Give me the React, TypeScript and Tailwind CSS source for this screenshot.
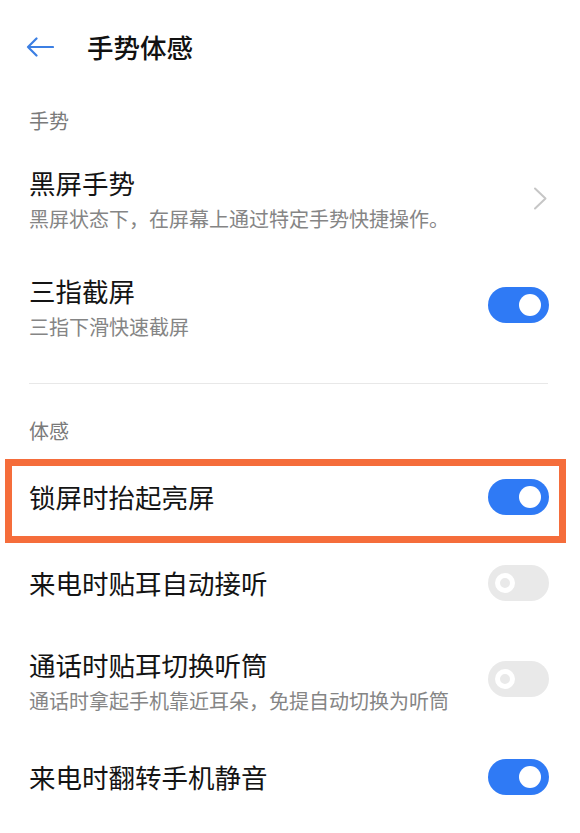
import { useState } from 'react';

type Kind = 'chevron' | 'toggle';

interface Item {
  title: string;
  desc?: string;
  kind: Kind;
  on?: boolean;
  highlight?: boolean;
}

interface Section {
  label: string;
  items: Item[];
}

const sections: Section[] = [
  {
    label: '手势',
    items: [
      { title: '黑屏手势', desc: '黑屏状态下，在屏幕上通过特定手势快捷操作。', kind: 'chevron' },
      { title: '三指截屏', desc: '三指下滑快速截屏', kind: 'toggle', on: true },
    ],
  },
  {
    label: '体感',
    items: [
      { title: '锁屏时抬起亮屏', kind: 'toggle', on: true, highlight: true },
      { title: '来电时贴耳自动接听', kind: 'toggle', on: false },
      { title: '通话时贴耳切换听筒', desc: '通话时拿起手机靠近耳朵，免提自动切换为听筒', kind: 'toggle', on: false },
      { title: '来电时翻转手机静音', kind: 'toggle', on: true },
    ],
  },
];

function Toggle({ on, onClick, lifted }: { on: boolean; onClick: () => void; lifted?: boolean }) {
  return (
    <button
      onClick={onClick}
      className={`relative w-[61px] h-[36px] rounded-full flex-shrink-0 ${on ? 'bg-[#2f7af5]' : 'bg-[#e9e9e9]'} ${
        lifted ? 'mb-[5px]' : ''
      }`}
    >
      {on ? (
        <span className="absolute right-[8px] top-[7px] w-[22px] h-[22px] rounded-full bg-white" />
      ) : (
        <span className="absolute left-[7px] top-[8px] w-[20px] h-[20px] rounded-full border-[5px] border-white bg-[#e9e9e9]" />
      )}
    </button>
  );
}

function Row({ item }: { item: Item }) {
  const [on, setOn] = useState(!!item.on);
  const twoLine = !!item.desc;

  return (
    <div
      className={`relative flex items-center pl-[29px] pr-[31px] ${
        twoLine ? 'pt-[22px] pb-[19px]' : 'h-[86px]'
      }`}
    >
      <div className="flex-1 min-w-0">
        <div className="text-[26.5px] leading-[34px] text-[#141414]">{item.title}</div>
        {item.desc && (
          <div className="mt-[5px] text-[20px] leading-[28px] text-[#858585]">{item.desc}</div>
        )}
      </div>
      {item.kind === 'chevron' ? (
        <svg width="15" height="23" viewBox="0 0 15 23" fill="none" className="mr-[1px] mb-[2px] flex-shrink-0">
          <path d="M2 1.5 L12.5 11.5 L2 21.5" stroke="#c6c6c6" strokeWidth="2" strokeLinecap="round" strokeLinejoin="round" />
        </svg>
      ) : (
        <Toggle on={on} lifted={twoLine} onClick={() => setOn(!on)} />
      )}

      {/* highlight frame drawn over the row */}
      {item.highlight && (
        <div className="pointer-events-none absolute top-[5px] left-[5px] right-[14px] -bottom-[3px] border-[7px] border-[#f56d3b]" />
      )}
    </div>
  );
}

export default function App() {
  return (
    <div
      className="w-[580px] min-h-[833px] bg-white"
      style={{ fontFamily: '"Noto Sans CJK SC", "Noto Sans", sans-serif' }}
    >
      {/* Header */}
      <div className="h-[98px] flex items-center pl-[26px] pb-[4px]">
        <svg width="28" height="20" viewBox="0 0 28 20" fill="none">
          <path d="M27 10 H2 M10.5 1.5 L2 10 L10.5 18.5" stroke="#3c7fe3" strokeWidth="2.2" strokeLinecap="round" strokeLinejoin="round" />
        </svg>
        <h1 className="ml-[33px] text-[26.5px] leading-[34px] font-medium text-[#111]">手势体感</h1>
      </div>

      {sections.map((section, i) => (
        <div key={section.label}>
          {i > 0 && (
            <div className="pt-[23px] pb-[24px]">
              <div className="ml-[29px] mr-[32px] h-px bg-[#e8e8e8]" />
            </div>
          )}
          <div className="h-[46px] flex items-center pl-[29px] text-[20px] text-[#7a7a7a]">
            {section.label}
          </div>
          {section.items.map((item) => (
            <Row key={item.title} item={item} />
          ))}
        </div>
      ))}
    </div>
  );
}
